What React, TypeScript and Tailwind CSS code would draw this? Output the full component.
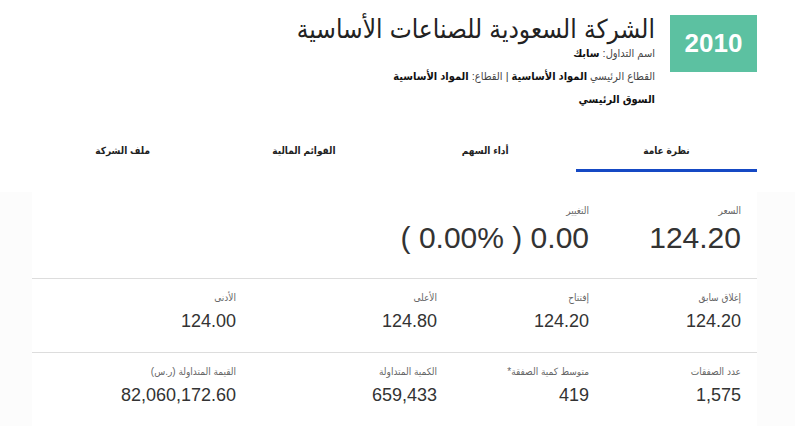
import React from "react";

const tabs = ["نظرة عامة", "أداء السهم", "القوائم المالية", "ملف الشركة"];

const rows = [
  [
    { label: "إغلاق سابق", value: "124.20" },
    { label: "إفتتاح", value: "124.20" },
    { label: "الأعلى", value: "124.80" },
    { label: "الأدنى", value: "124.00" },
  ],
  [
    { label: "عدد الصفقات", value: "1,575" },
    { label: "متوسط كمية الصفقة*", value: "419" },
    { label: "الكمية المتداولة", value: "659,433" },
    { label: "القيمة المتداولة (ر.س)", value: "82,060,172.60" },
  ],
];

export default function App() {
  return (
    <div
      dir="rtl"
      className="w-[795px] h-[426px] overflow-hidden bg-white text-[#333]"
      style={{ fontFamily: '"Liberation Sans", "DejaVu Sans Condensed", "DejaVu Sans", sans-serif' }}
    >
      {/* Header */}
      <div className="flex items-start gap-[15px] pt-[15px] pr-[38px]">
        <div className="w-[87px] h-[57px] bg-[#5cc1a1] flex items-center justify-center text-white text-[26px] font-bold">
          2010
        </div>
        <div className="-mt-[4px]">
          <h1 className="text-[26px] leading-[36px] text-[#222]">
            الشركة السعودية للصناعات الأساسية
          </h1>
          <div className="text-[11px] leading-[23px] text-[#444] -mt-[5px]">
            <div>
              اسم التداول: <b className="text-[#111]">سابك</b>
            </div>
            <div>
              القطاع الرئيسي <b className="text-[#111]">المواد الأساسية</b> | القطاع:{" "}
              <b className="text-[#111]">المواد الأساسية</b>
            </div>
            <div>
              <b className="text-[#111]">السوق الرئيسي</b>
            </div>
          </div>
        </div>
      </div>

      {/* Tabs */}
      <div className="mt-[21px] mr-[38px] ml-[32px] grid grid-cols-4">
        {tabs.map((t, i) => (
          <div
            key={t}
            className={`h-[40px] flex items-center justify-center text-[10px] font-bold text-[#222] ${
              i === 0 ? "border-b-[3px] border-[#1549c4]" : "border-b-[3px] border-transparent"
            }`}
          >
            {t}
          </div>
        ))}
      </div>

      {/* Stats */}
      <div className="mt-[20px] bg-[#fcfcfc] pl-[32px] pr-[38px]">
        <div className="bg-white">
          <div className="flex h-[87px] pt-[12px] border-b-[1.5px] border-[#ddd]">
            <div className="w-[152px] pr-[16px]">
              <div className="text-[10px] text-[#666] leading-[14px]">السعر</div>
              <div className="text-[30px] leading-[36px] mt-[2px]">124.20</div>
            </div>
            <div className="pr-[16px]">
              <div className="text-[10px] text-[#666] leading-[14px]">التغيير</div>
              <div className="text-[30px] leading-[36px] mt-[2px]" dir="ltr">
                ( 0.00% ) 0.00
              </div>
            </div>
          </div>
          {rows.map((row, ri) => (
            <div
              key={ri}
              className="grid grid-cols-[152px_152px_201px_1fr] h-[74px] pt-[12px] border-b-[1.5px] border-[#ddd]"
            >
              {row.map((c) => (
                <div key={c.label} className="pr-[16px]">
                  <div className="text-[10px] text-[#666] leading-[14px]">{c.label}</div>
                  <div className="text-[18px] leading-[26px] mt-[3px]">{c.value}</div>
                </div>
              ))}
            </div>
          ))}
        </div>
      </div>
    </div>
  );
}
